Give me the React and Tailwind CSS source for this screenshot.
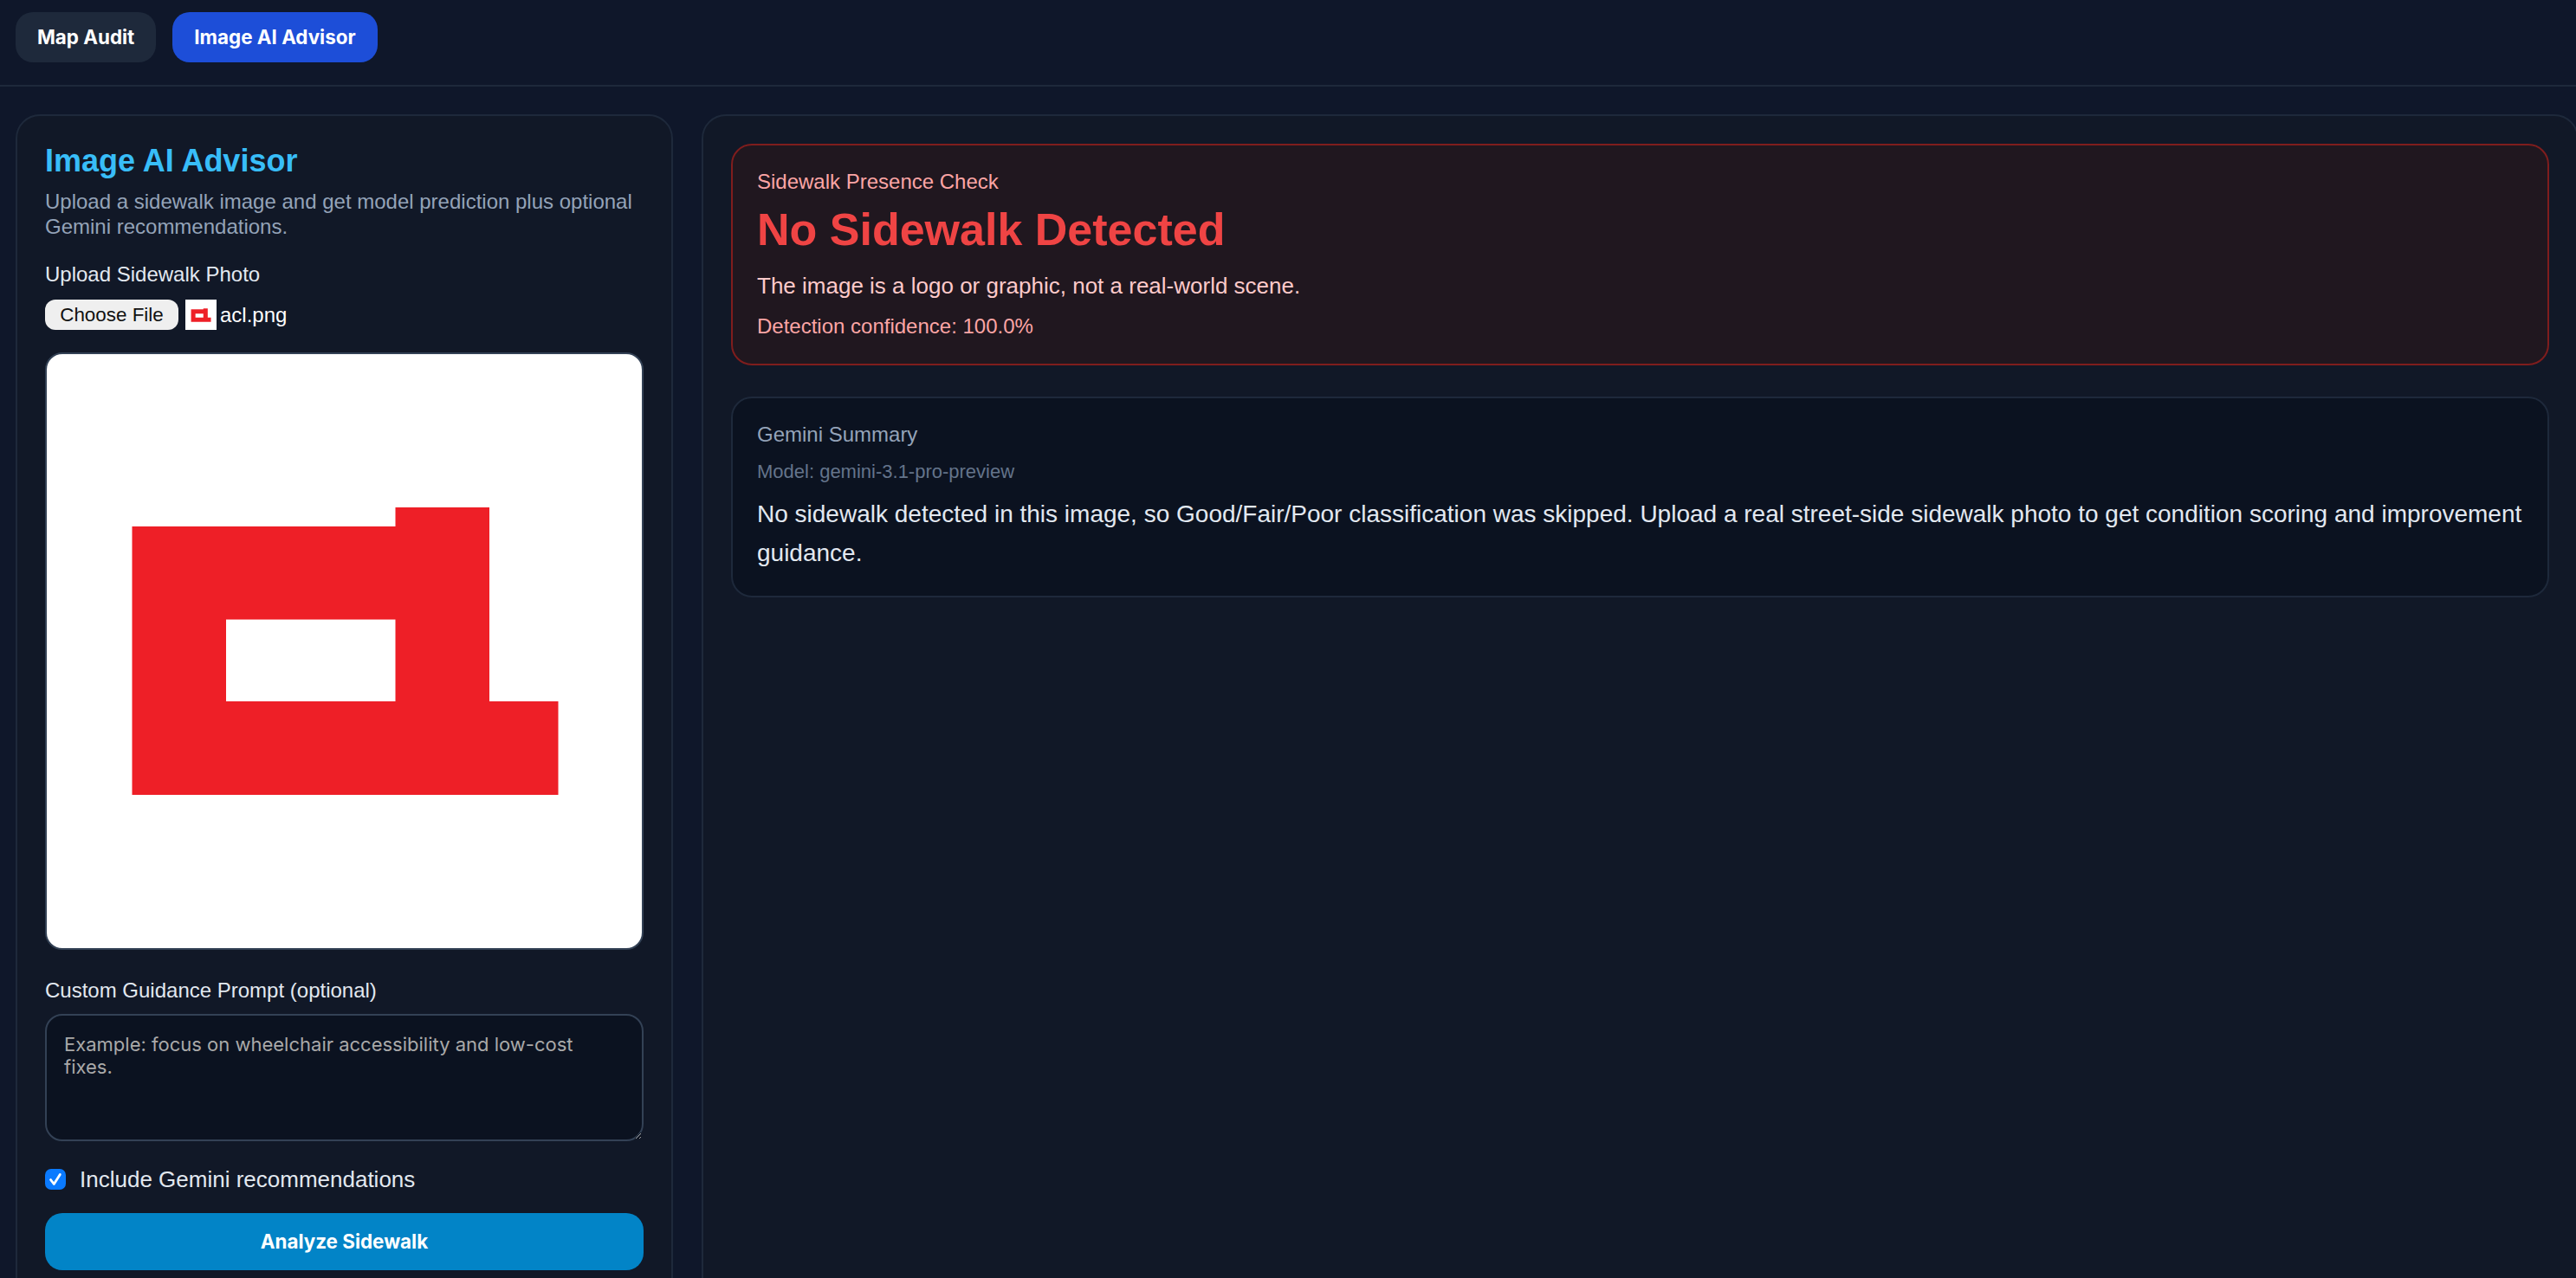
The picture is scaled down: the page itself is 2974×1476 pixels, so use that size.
import { useState } from "react";

function AclLogo({ className }) {
  return (
    <svg viewBox="0 0 685 686" className={className}>
      <path
        fill="#ee1f27"
        fillRule="evenodd"
        d="M97.5 199H401.500V177H510V401H589.500V509H97.5ZM206 306.500V401H401.500V306.500Z"
      />
    </svg>
  );
}

function NavButton({ active, children }) {
  return (
    <button
      className={
        active
          ? "h-[58px] px-[25px] rounded-[20px] bg-[#1d4ed8] text-white text-[22.4px] font-bold font-['Inter',sans-serif]"
          : "h-[58px] px-[25px] rounded-[20px] bg-[#1e293b] text-white text-[22.4px] font-bold font-['Inter',sans-serif]"
      }
    >
      {children}
    </button>
  );
}

export default function App() {
  const [tips, setTips] = useState(true);

  return (
    <div className="h-screen w-full overflow-hidden bg-[#0f172a] font-['Liberation_Sans',Arial,sans-serif]">
      {/* Top nav */}
      <nav className="flex gap-[19px] h-[100px] px-[18px] pt-[14px] border-b-2 border-[#1e293b]">
        <NavButton>Map Audit</NavButton>
        <NavButton active>Image AI Advisor</NavButton>
      </nav>

      <div className="grid grid-cols-[759px_2167px] gap-[33px] px-[18px] pt-[32px]">
        {/* Left panel */}
        <aside className="bg-[#111827] border-2 border-[#1e293b] rounded-[28px] p-8 h-[1500px]">
          <h2 className="text-[36px] leading-[40px] font-bold text-[#38bdf8]">Image AI Advisor</h2>
          <p className="mt-3 text-[24px] leading-[29px] text-[#94a3b8]">
            Upload a sidewalk image and get model prediction plus optional Gemini recommendations.
          </p>

          <label className="block mt-[26px] text-[24px] leading-[30px] text-[#e2e8f0]">Upload Sidewalk Photo</label>
          <div className="flex items-center mt-[14px] h-[35px]">
            <button className="h-[35px] w-[154px] pt-px rounded-[12px] bg-[#efefef] text-[#111] text-[22.4px] leading-none">
              Choose File
            </button>
            <div className="ml-2 w-[36px] h-[35px] bg-white flex items-center justify-center">
              <AclLogo className="w-[32px] h-[32px]" />
            </div>
            <span className="ml-[4px] text-[24px] text-white">acl.png</span>
          </div>

          <div className="mt-[26px] h-[690px] bg-white border-2 border-[#334155] rounded-[20px] overflow-hidden">
            <AclLogo className="w-full h-full" />
          </div>

          <label className="block mt-8 text-[24px] leading-[30px] text-[#e2e8f0]">Custom Guidance Prompt (optional)</label>
          <textarea
            className="block mt-3 w-full h-[147px] px-5 py-5 bg-[#0b1220] border-2 border-[#334155] rounded-[20px] text-[22px] leading-[26px] text-[#e2e8f0] placeholder:text-[#a9a9a9] font-['Inter',sans-serif]"
            placeholder="Example: focus on wheelchair accessibility and low-cost fixes."
          />

          <label className="flex items-center gap-4 mt-[29px] h-[30px] text-[26px] text-[#e2e8f0]">
            <span className="grid w-6 h-6">
              <input
                type="checkbox"
                checked={tips}
                onChange={(e) => setTips(e.target.checked)}
                className="[grid-area:1/1] w-6 h-6 m-0 appearance-none rounded-[7px] bg-[#0a7aff]"
              />
              <svg viewBox="0 0 24 24" className="[grid-area:1/1] w-6 h-6 pointer-events-none">
                <path d="M6.500 12.500l3.800 5 7-11" fill="none" stroke="white" strokeWidth="2.800" strokeLinecap="round" strokeLinejoin="round" />
              </svg>
            </span>
            Include Gemini recommendations
          </label>

          <button className="mt-6 w-full h-[66px] rounded-[20px] bg-[#0284c7] text-white text-[22.4px] font-bold font-['Inter',sans-serif]">
            Analyze Sidewalk
          </button>
        </aside>

        {/* Right panel */}
        <main className="bg-[#111827] border-2 border-[#1e293b] rounded-[28px] p-8 h-[1500px]">
          <section className="h-[256px] bg-[#20171f] border-2 border-[#7f1d1d] rounded-[24px] px-7 pt-7">
            <p className="text-[24px] leading-[28px] text-[#fca5a5]">Sidewalk Presence Check</p>
            <h1 className="mt-[11px] text-[52px] leading-[60px] font-bold text-[#ef4444]">No Sidewalk Detected</h1>
            <p className="mt-[19px] text-[26px] leading-[32px] text-[#fecaca]">
              The image is a logo or graphic, not a real-world scene.
            </p>
            <p className="mt-4 text-[24px] leading-[30px] text-[#fca5a5]">Detection confidence: 100.0%</p>
          </section>

          <section className="mt-9 bg-[#0b1220] border-2 border-[#1e293b] rounded-[24px] px-7 pt-7 pb-[26px]">
            <p className="text-[24px] leading-[28px] text-[#94a3b8]">Gemini Summary</p>
            <p className="mt-[15px] text-[22px] leading-[28px] text-[#64748b]">Model: gemini-3.1-pro-preview</p>
            <p className="mt-[13px] text-[28px] leading-[44.8px] text-[#e2e8f0]">
              No sidewalk detected in this image, so Good/Fair/Poor classification was skipped. Upload a real
              street-side sidewalk photo to get condition scoring and improvement guidance.
            </p>
          </section>
        </main>
      </div>
    </div>
  );
}
